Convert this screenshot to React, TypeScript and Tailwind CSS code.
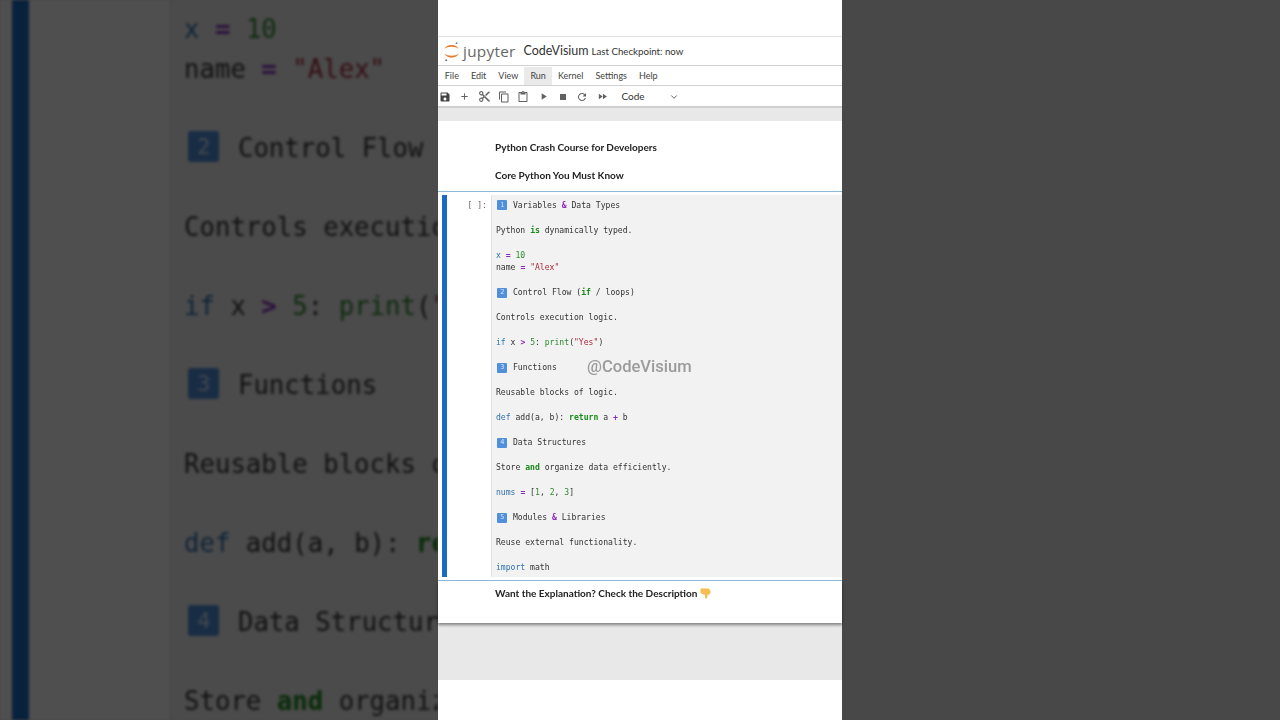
import React from "react";
import { MdSave, MdAdd, MdContentCut, MdContentCopy, MdContentPaste, MdPlayArrow, MdStop, MdRefresh, MdFastForward } from "react-icons/md";
import { ChevronDown } from "lucide-react";

const Kw = ({ children }: { children: React.ReactNode }) => <span className="font-bold text-[#1a8a1a]">{children}</span>;
const Op = ({ children }: { children: React.ReactNode }) => <span className="font-bold text-[#8a2cc0]">{children}</span>;
const Bl = ({ children }: { children: React.ReactNode }) => <span className="text-[#2f72ad]">{children}</span>;
const Gr = ({ children }: { children: React.ReactNode }) => <span className="text-[#2e8b2e]">{children}</span>;
const Rd = ({ children }: { children: React.ReactNode }) => <span className="text-[#a82a3a]">{children}</span>;
const Cap = ({ n }: { n: string }) => (
  <span className="inline-flex items-center justify-center w-[1.41em] h-[1.41em] ml-[0.2em] mr-[0.86em] align-[0.12em] rounded-[0.14em] bg-[#4f8fdc] text-[#dbe9fa] text-[0.85em] leading-none">
    {n}
  </span>
);

const lines: React.ReactNode[] = [
  <><Cap n="1" />Variables <Op>&amp;</Op> Data Types</>,
  "",
  <>Python <Kw>is</Kw> dynamically typed.</>,
  "",
  <><Bl>x</Bl> <Op>=</Op> <Gr>10</Gr></>,
  <>name <Op>=</Op> <Rd>"Alex"</Rd></>,
  "",
  <><Cap n="2" />Control Flow (<Kw>if</Kw> / loops)</>,
  "",
  <>Controls execution logic.</>,
  "",
  <><Bl>if</Bl> x <Op>&gt;</Op> <Gr>5</Gr>: <Gr>print</Gr>(<Rd>"Yes"</Rd>)</>,
  "",
  <><Cap n="3" />Functions</>,
  "",
  <>Reusable blocks of logic.</>,
  "",
  <><Bl>def</Bl> add(a, b): <Kw>return</Kw> a <Op>+</Op> b</>,
  "",
  <><Cap n="4" />Data Structures</>,
  "",
  <>Store <Kw>and</Kw> organize data efficiently.</>,
  "",
  <><Bl>nums</Bl> <Op>=</Op> [<Gr>1</Gr>, <Gr>2</Gr>, <Gr>3</Gr>]</>,
  "",
  <><Cap n="5" />Modules <Op>&amp;</Op> Libraries</>,
  "",
  <>Reuse external functionality.</>,
  "",
  <><Bl>import</Bl> math</>,
];

const CodeLines = ({ items }: { items: React.ReactNode[] }) => (
  <>
    {items.map((l, i) => (
      <div key={i} className="h-[1lh] whitespace-pre">{l}</div>
    ))}
  </>
);

const mono = "font-['DejaVu_Sans_Mono','Liberation_Mono',monospace]";
const sans = "font-['Lato','Noto_Sans',sans-serif]";

const Blurred = () => (
  <div className="h-full overflow-hidden bg-white flex brightness-[0.31] blur-[1.4px]">
    <div className="w-[12px] shrink-0" />
    <div className="w-[17px] shrink-0 bg-[#1a6ac0]" />
    <div className="w-[141px] shrink-0" />
    <div className={`flex-1 border-l border-[#e0e0e0] bg-[#f2f2f2] pl-[13px] pt-[10px] text-[25.7px] leading-[39.5px] text-[#333] overflow-hidden ${mono}`}>
      <CodeLines items={lines.slice(4, 22)} />
    </div>
  </div>
);

const menu = ["File", "Edit", "View", "Run", "Kernel", "Settings", "Help"];

const tools = [
  <MdSave size={12} />,
  <MdAdd size={11} />,
  <MdContentCut size={13} />,
  <MdContentCopy size={12} />,
  <MdContentPaste size={12} />,
  <MdPlayArrow size={11} />,
  <MdStop size={12} />,
  <MdRefresh size={12} />,
  <MdFastForward size={11} />,
];

export default function App() {
  return (
    <div className="flex w-[1280px] h-[720px] overflow-hidden bg-[#484848]">
      <div className="w-[438px] h-full shrink-0 overflow-hidden">
        <Blurred />
      </div>

      <div className={`relative w-[404px] h-full shrink-0 flex flex-col bg-white blur-[0.3px] ${sans}`}>
        <div className="h-[37px] shrink-0 border-b border-[#e4e4e4]" />

        {/* Header */}
        <div className="h-[29px] shrink-0 flex items-center pt-[1px] pl-[5.5px] border-b border-[#d0d0d0]">
          <svg width="15" height="20" viewBox="0 0 15 20" className="shrink-0">
            <path d="M0.5 7 C2 1.5 13 1.5 14.5 7 C12 4 3 4 0.5 7 Z" fill="#e87a2c" />
            <path d="M0.5 11.5 C2 17 13 17 14.5 11.5 C12 14.5 3 14.5 0.5 11.5 Z" fill="#e87a2c" />
            <circle cx="12.5" cy="1.2" r="0.9" fill="#777" />
            <circle cx="2.2" cy="18.2" r="1" fill="#777" />
          </svg>
          <span className="ml-[4.5px] w-[56.5px] shrink-0 text-[15.3px] leading-none tracking-[0.3px] text-[#666] font-['Open_Sans',sans-serif]">jupyter</span>
          <span className="ml-[4px] w-[68px] shrink-0 text-[12.5px] leading-none text-[#333]">CodeVisium</span>
          <span className="text-[9.7px] leading-none text-[#333]">Last Checkpoint: now</span>
        </div>

        {/* Menu */}
        <div className="h-[20px] shrink-0 flex items-stretch pl-[.8px] pt-[1px] border-b border-[#d0d0d0] text-[9px] text-[#444]">
          {menu.map((m) => (
            <div key={m} className={`flex items-center px-[6px] ${m === "Run" ? "bg-[#eaeaea]" : ""}`}>{m}</div>
          ))}
        </div>

        {/* Toolbar */}
        <div className="h-[22px] shrink-0 flex items-center pt-[1px] border-b-2 border-[#cfcfcf] text-[#616161] text-[10px]">
          {tools.map((t, i) => (
            <div key={i} className="w-[19.7px] shrink-0 flex items-center justify-center first:w-[14px] first:mr-[2.5px] first:text-[#444]">{t}</div>
          ))}
          <span className="ml-[9.5px] w-[47px] text-[#333]">Code</span>
          <ChevronDown size={10} strokeWidth={2.2} className="text-[#555]" />
        </div>

        {/* Strip */}
        <div className="h-[13px] shrink-0 bg-[#e8e8e8]" />

        {/* Titles */}
        <div className="h-[71px] shrink-0 pl-[57px] pt-[19px] text-[10px] leading-[14px] font-bold text-[#222] flex flex-col gap-[14px] border-b border-[#90bcdc]">
          <div>Python Crash Course for Developers</div>
          <div>Core Python You Must Know</div>
        </div>

        {/* Cell */}
        <div className="h-[389px] shrink-0 flex pt-[3px] pb-[3px] border-b border-[#90bcdc]">
          <div className="ml-[4px] w-[5px] bg-[#1a6ac0] shrink-0" />
          <div className={`w-[44px] shrink-0 pr-[4px] pt-[4px] text-right text-[8.1px] leading-[12.5px] text-[#666] ${mono}`}>[ ]:</div>
          <div className={`relative flex-1 border-l border-[#e0e0e0] bg-[#f2f2f2] pl-[4px] pt-[3.6px] text-[8.1px] leading-[12.5px] text-[#333] ${mono}`}>
            <CodeLines items={lines} />
            <span className="absolute left-[95px] top-[162px] text-[16.6px] leading-[20px] font-medium text-[#9b9b9b] font-['Roboto',sans-serif]">@CodeVisium</span>
          </div>
        </div>

        {/* Bottom note */}
        <div className="h-[42px] shrink-0 pl-[57px] pt-[5px] text-[10px] leading-[14px] font-bold text-[#222] flex items-start shadow-[0_2px_3px_rgba(0,0,0,0.45)] relative">
          <span>Want the Explanation? Check the Description</span>
          <svg width="11" height="12" viewBox="0 0 11 12" className="ml-[3px] mt-[1px]">
            <path d="M0.5 1.5 H7 C9.3 1.5 10.5 3 10.5 5.2 C10.5 6.8 9 7.8 7.6 7.8 L7.2 10.8 C7 11.8 5 11.8 5 10.8 V7.8 C3 7.8 0.5 6.5 0.5 5 Z" fill="#f5bd52" />
          </svg>
        </div>

        <div className="h-[57px] shrink-0 bg-[#e8e8e8]" />
        <div className="flex-1 bg-white" />
      </div>

      <div className="flex-1 h-full bg-[#484848]" />
    </div>
  );
}
